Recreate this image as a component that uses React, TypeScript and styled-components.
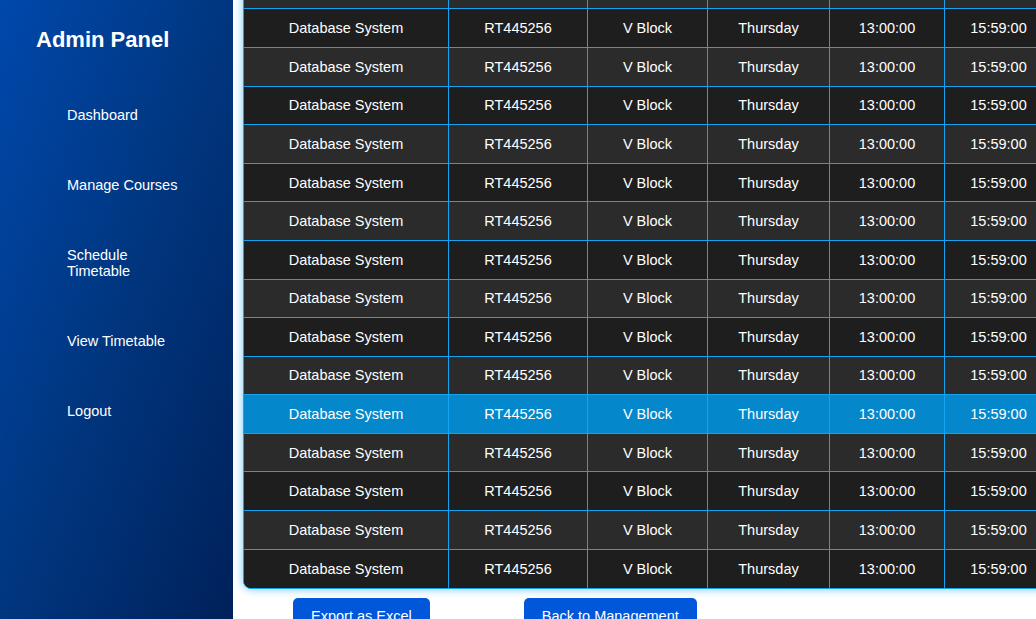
import React, { useLayoutEffect, useRef } from "react";
import styled, { createGlobalStyle } from "styled-components";

const GlobalStyle = createGlobalStyle`
  html, body, #root { margin: 0; padding: 0; height: 100%; }
  body { font-family: "Liberation Sans", Arial, sans-serif; background: #fff; overflow: hidden; }
  * { box-sizing: border-box; }
`;

const Layout = styled.div`
  display: flex;
  height: 100vh;
  width: 100vw;
  overflow: hidden;
`;

const Sidebar = styled.aside`
  flex: 0 0 233px;
  height: 100%;
  background: linear-gradient(to bottom right, #0048ac 0%, #00367f 50%, #00215a 100%);
  color: #fff;
  display: flex;
  flex-direction: column;
`;

const Brand = styled.h2`
  margin: 0;
  height: 80px;
  display: flex;
  align-items: center;
  padding-left: 36px;
  font-size: 22px;
  font-weight: bold;
  color: #fff;
`;

const NavList = styled.ul`
  list-style: none;
  margin: 0;
  padding: 0;
`;

const NavItem = styled.li`
  padding: 27px 0 27px 67px;
`;

const NavLink = styled.a`
  display: block;
  max-width: 118px;
  color: #fff;
  text-decoration: none;
  font-size: 14.5px;
  line-height: 16px;
`;

const Main = styled.main`
  flex: 1;
  height: 100%;
  overflow: hidden;
  padding: 20px 0 24px 10px;
`;

const Title = styled.h1`
  margin: 0 0 20px 40px;
  font-size: 26px;
  color: #0047ab;
`;

const TableWrap = styled.div`
  width: 1000px;
  border: 1px solid #14a3f0;
  border-radius: 8px;
  overflow: hidden;
  box-shadow: 0 0 10px rgba(0, 160, 255, 0.55);
  background: #1e1e1e;
`;

const Table = styled.table`
  border-collapse: separate;
  border-spacing: 0;
  table-layout: fixed;
  width: 1000px;
`;

const HeadCell = styled.th`
  height: 44px;
  padding: 0 12px;
  background: #003c8f;
  color: #fff;
  font-size: 14.5px;
  font-weight: bold;
  text-align: center;
  border-right: 1px solid #14a3f0;
  border-bottom: 1px solid #14a3f0;
`;

const Row = styled.tr<{ $active?: boolean }>`
  background: ${(p) => (p.$active ? "#0588cb" : "#1e1e1e")};
  &:nth-child(even) {
    background: ${(p) => (p.$active ? "#0588cb" : "#2b2b2b")};
  }
  &:last-child td {
    border-bottom: none;
  }
`;

const Cell = styled.td`
  height: 38.58px;
  padding: 0 12px;
  color: #fff;
  font-size: 14.5px;
  text-align: center;
  vertical-align: middle;
  white-space: nowrap;
  border-right: 1px solid #14a3f0;
  border-bottom: 1px solid #14a3f0;
`;

const Actions = styled.div`
  display: flex;
  gap: 94px;
  margin-top: 9px;
  padding-left: 50px;
`;

const Button = styled.button`
  height: 36px;
  padding: 0 18px;
  border: none;
  border-radius: 5px;
  background: #0057d9;
  color: #fff;
  font-family: "Liberation Sans", Arial, sans-serif;
  font-size: 14.5px;
  cursor: pointer;
`;

const columns = [
  { label: "Course Name", width: 205 },
  { label: "Course Code", width: 139 },
  { label: "Block", width: 120 },
  { label: "Day", width: 122 },
  { label: "Start Time", width: 115 },
  { label: "End Time", width: 108 },
  { label: "Faculty", width: 191 },
];

const rows = Array.from({ length: 21 }, () => [
  "Database System",
  "RT445256",
  "V Block",
  "Thursday",
  "13:00:00",
  "15:59:00",
  "Dr. Kumar",
]);

const navItems = ["Dashboard", "Manage Courses", "Schedule Timetable", "View Timetable", "Logout"];

export default function App() {
  const mainRef = useRef<HTMLElement>(null);
  const wrapRef = useRef<HTMLDivElement>(null);

  useLayoutEffect(() => {
    const main = mainRef.current;
    const wrap = wrapRef.current;
    if (!main || !wrap) return;
    const mainTop = main.getBoundingClientRect().top;
    const bottom = wrap.getBoundingClientRect().bottom - mainTop + main.scrollTop;
    main.scrollTop = bottom - 589;
  }, []);

  return (
    <>
      <GlobalStyle />
      <Layout>
        <Sidebar>
          <Brand>Admin Panel</Brand>
          <NavList>
            {navItems.map((n) => (
              <NavItem key={n}>
                <NavLink href="#">{n}</NavLink>
              </NavItem>
            ))}
          </NavList>
        </Sidebar>
        <Main ref={mainRef}>
          <Title>Timetable</Title>
          <TableWrap ref={wrapRef}>
            <Table>
              <colgroup>
                {columns.map((c) => (
                  <col key={c.label} style={{ width: c.width }} />
                ))}
              </colgroup>
              <thead>
                <tr>
                  {columns.map((c) => (
                    <HeadCell key={c.label}>{c.label}</HeadCell>
                  ))}
                </tr>
              </thead>
              <tbody>
                {rows.map((r, i) => (
                  <Row key={i} $active={i === 16}>
                    {r.map((v, j) => (
                      <Cell key={j}>{v}</Cell>
                    ))}
                  </Row>
                ))}
              </tbody>
            </Table>
          </TableWrap>
          <Actions>
            <Button>Export as Excel</Button>
            <Button>Back to Management</Button>
          </Actions>
        </Main>
      </Layout>
    </>
  );
}
